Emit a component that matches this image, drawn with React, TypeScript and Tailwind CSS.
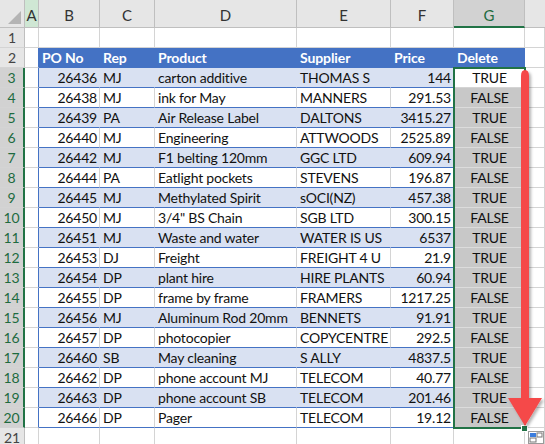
import React from "react";

type Row = [number, string, string, string, string, boolean];

const rows: Row[] = [
  [26436, "MJ", "carton additive", "THOMAS S", "144", true],
  [26438, "MJ", "ink for May", "MANNERS", "291.53", false],
  [26439, "PA", "Air Release Label", "DALTONS", "3415.27", true],
  [26440, "MJ", "Engineering", "ATTWOODS", "2525.89", false],
  [26442, "MJ", "F1 belting 120mm", "GGC LTD", "609.94", true],
  [26444, "PA", "Eatlight pockets", "STEVENS", "196.87", false],
  [26445, "MJ", "Methylated Spirit", "sOCI(NZ)", "457.38", true],
  [26450, "MJ", '3/4" BS Chain', "SGB LTD", "300.15", false],
  [26451, "MJ", "Waste and water", "WATER IS US", "6537", true],
  [26453, "DJ", "Freight", "FREIGHT 4 U", "21.9", true],
  [26454, "DP", "plant hire", "HIRE PLANTS", "60.94", true],
  [26455, "DP", "frame by frame", "FRAMERS", "1217.25", false],
  [26456, "MJ", "Aluminum Rod 20mm", "BENNETS", "91.91", true],
  [26457, "DP", "photocopier", "COPYCENTRE", "292.5", false],
  [26460, "SB", "May cleaning", "S ALLY", "4837.5", true],
  [26462, "DP", "phone account MJ", "TELECOM", "40.77", false],
  [26463, "DP", "phone account SB", "TELECOM", "201.46", true],
  [26466, "DP", "Pager", "TELECOM", "19.12", false],
];

const font = { fontFamily: "Lato, 'Liberation Sans', sans-serif" };

function RowHead({ n, sel }: { n: number; sel?: boolean }) {
  return (
    <div
      className={
        "w-[25px] h-full shrink-0 flex items-center justify-center border-b border-b-[#d4d4d4] text-[14px] tracking-normal font-normal " +
        (sel
          ? "bg-[#d2d2d2] text-[#1e6b3f] border-r-2 border-r-[#217346]"
          : "bg-[#e6e6e6] text-[#444] border-r border-r-[#bfbfbf]")
      }
    >
      {n}
    </div>
  );
}

function Blank({ w }: { w: string }) {
  return <div className={w + " h-full shrink-0 border-b border-r border-[#d4d4d4] bg-white"} />;
}

export default function App() {
  return (
    <div className="relative w-[545px] h-[444px] overflow-hidden bg-white text-[#111]" style={font}>
      {/* column headers */}
      <div className="flex h-[28px] bg-[#e6e6e6] text-[15px] text-[#333]">
        <div className="w-[25px] shrink-0 relative border-r border-b border-[#bfbfbf]">
          <div className="absolute right-[3px] bottom-[3px] w-0 h-0 border-l-[13px] border-l-transparent border-b-[13px] border-b-[#b4b4b4]" />
        </div>
        <div className="w-[14px] shrink-0 bg-[#cfe7d4] border-r border-b border-[#bfbfbf] flex items-end justify-center pb-[1px]">A</div>
        <div className="w-[61px] shrink-0 border-r border-b border-[#bfbfbf] flex items-end justify-center pb-[1px]">B</div>
        <div className="w-[55px] shrink-0 border-r border-b border-[#bfbfbf] flex items-end justify-center pb-[1px]">C</div>
        <div className="w-[142px] shrink-0 border-r border-b border-[#bfbfbf] flex items-end justify-center pb-[1px]">D</div>
        <div className="w-[94px] shrink-0 border-r border-b border-[#bfbfbf] flex items-end justify-center pb-[1px]">E</div>
        <div className="w-[63px] shrink-0 border-r border-b border-[#bfbfbf] flex items-end justify-center pb-[1px]">F</div>
        <div className="w-[71px] shrink-0 bg-[#d2d2d2] text-[#1e6b3f] border-r border-r-[#bfbfbf] border-b-2 border-b-[#217346] flex items-end justify-center pb-0">G</div>
        <div className="w-[20px] shrink-0 border-b border-[#bfbfbf]" />
      </div>

      {/* row 1 */}
      <div className="flex h-[20px]">
        <RowHead n={1} />
        <Blank w="w-[14px]" />
        <Blank w="w-[61px]" />
        <Blank w="w-[55px]" />
        <Blank w="w-[142px]" />
        <Blank w="w-[94px]" />
        <Blank w="w-[63px]" />
        <Blank w="w-[71px]" />
        <Blank w="w-[20px]" />
      </div>

      {/* row 2 - table header */}
      <div className="flex h-[20px] text-[14px] font-bold text-white tracking-[-0.1px]">
        <RowHead n={2} />
        <div className="w-[14px] shrink-0 border-b border-r border-r-[#4472c4] border-b-[#d4d4d4]" />
        <div className="w-[61px] shrink-0 bg-[#4472c4] border-b border-[#4472c4] pl-[3px] leading-[20px]">PO No</div>
        <div className="w-[55px] shrink-0 bg-[#4472c4] border-b border-[#4472c4] pl-[3px] leading-[20px]">Rep</div>
        <div className="w-[142px] shrink-0 bg-[#4472c4] border-b border-[#4472c4] pl-[3px] leading-[20px]">Product</div>
        <div className="w-[94px] shrink-0 bg-[#4472c4] border-b border-[#4472c4] pl-[3px] leading-[20px]">Supplier</div>
        <div className="w-[63px] shrink-0 bg-[#4472c4] border-b border-[#4472c4] pl-[3px] leading-[20px]">Price</div>
        <div className="w-[71px] shrink-0 bg-[#4472c4] border-b border-[#4472c4] pl-[3px] leading-[20px]">Delete</div>
        <Blank w="w-[20px]" />
      </div>

      {/* data rows */}
      {rows.map(([po, rep, product, supplier, price, del], i) => {
        const band = i % 2 === 0;
        const cell =
          "shrink-0 h-full border-b border-b-[#4472c4] border-r leading-[20px] whitespace-nowrap overflow-hidden " +
          (band ? "bg-[#d9e1f2] border-r-[#d9e1f2]" : "bg-white border-r-[#d4d4d4]");
        return (
          <div key={po} className="flex h-[20px] text-[14px] tracking-[-0.2px]">
            <RowHead n={i + 3} sel />
            <div className="w-[14px] shrink-0 h-full border-b border-b-[#d4d4d4] border-r border-r-[#4472c4]" />
            <div className={cell + " w-[61px] text-right pr-[2px]"}>{po}</div>
            <div className={cell + " w-[55px] pl-[3px]"}>{rep}</div>
            <div className={cell + " w-[142px] pl-[3px]"}>{product}</div>
            <div className={cell + " w-[94px] pl-[3px]"}>{supplier}</div>
            <div className={cell + " w-[63px] text-right pr-[2px]"}>{price}</div>
            <div
              className={
                "w-[71px] shrink-0 h-full border-b text-center leading-[20px] " +
                (i === 0 ? "bg-white border-b-[#d4d4d4]" : "bg-[#c8c8c8] border-b-[#dcdcdc]")
              }
            >
              {del ? "TRUE" : "FALSE"}
            </div>
            <Blank w="w-[20px]" />
          </div>
        );
      })}

      {/* row 21 */}
      <div className="flex h-[20px]">
        <RowHead n={21} />
        <Blank w="w-[14px]" />
        <Blank w="w-[61px]" />
        <Blank w="w-[55px]" />
        <Blank w="w-[142px]" />
        <Blank w="w-[94px]" />
        <Blank w="w-[63px]" />
        <Blank w="w-[71px]" />
        <Blank w="w-[20px]" />
      </div>

      {/* selection border G3:G20 */}
      <div className="absolute left-[453px] top-[67px] w-[73px] h-[362px] border-2 border-[#217346] pointer-events-none" />
      <div className="absolute left-[521px] top-[425px] w-[7px] h-[7px] bg-[#217346] border border-white" />

      {/* red arrow */}
      <svg className="absolute left-0 top-0" width="545" height="444" viewBox="0 0 545 444">
        <defs>
          <filter id="sh" x="-50%" y="-10%" width="200%" height="120%">
            <feDropShadow dx="2" dy="2" stdDeviation="1.5" floodColor="#000" floodOpacity="0.3" />
          </filter>
        </defs>
        <g filter="url(#sh)">
          <path d="M521 76 Q521 70 525 70 Q529 70 529 76 L529 399 L521 399 Z" fill="#f54848" />
          <path d="M508 398 L542 398 L525 426 Z" fill="#f54848" />
        </g>
      </svg>

      {/* quick analysis icon */}
      <svg className="absolute left-[528px] top-[431px]" width="17" height="13" viewBox="0 0 17 13">
        <rect x="0.5" y="0.5" width="15" height="12" fill="#fff" stroke="#9a9a9a" />
        <rect x="2" y="2" width="6" height="4" fill="#3b7ddd" />
        <rect x="9" y="2" width="5" height="4" fill="none" stroke="#777" strokeWidth="1" />
        <rect x="2" y="7" width="6" height="4" fill="none" stroke="#777" strokeWidth="1" />
      </svg>
    </div>
  );
}
